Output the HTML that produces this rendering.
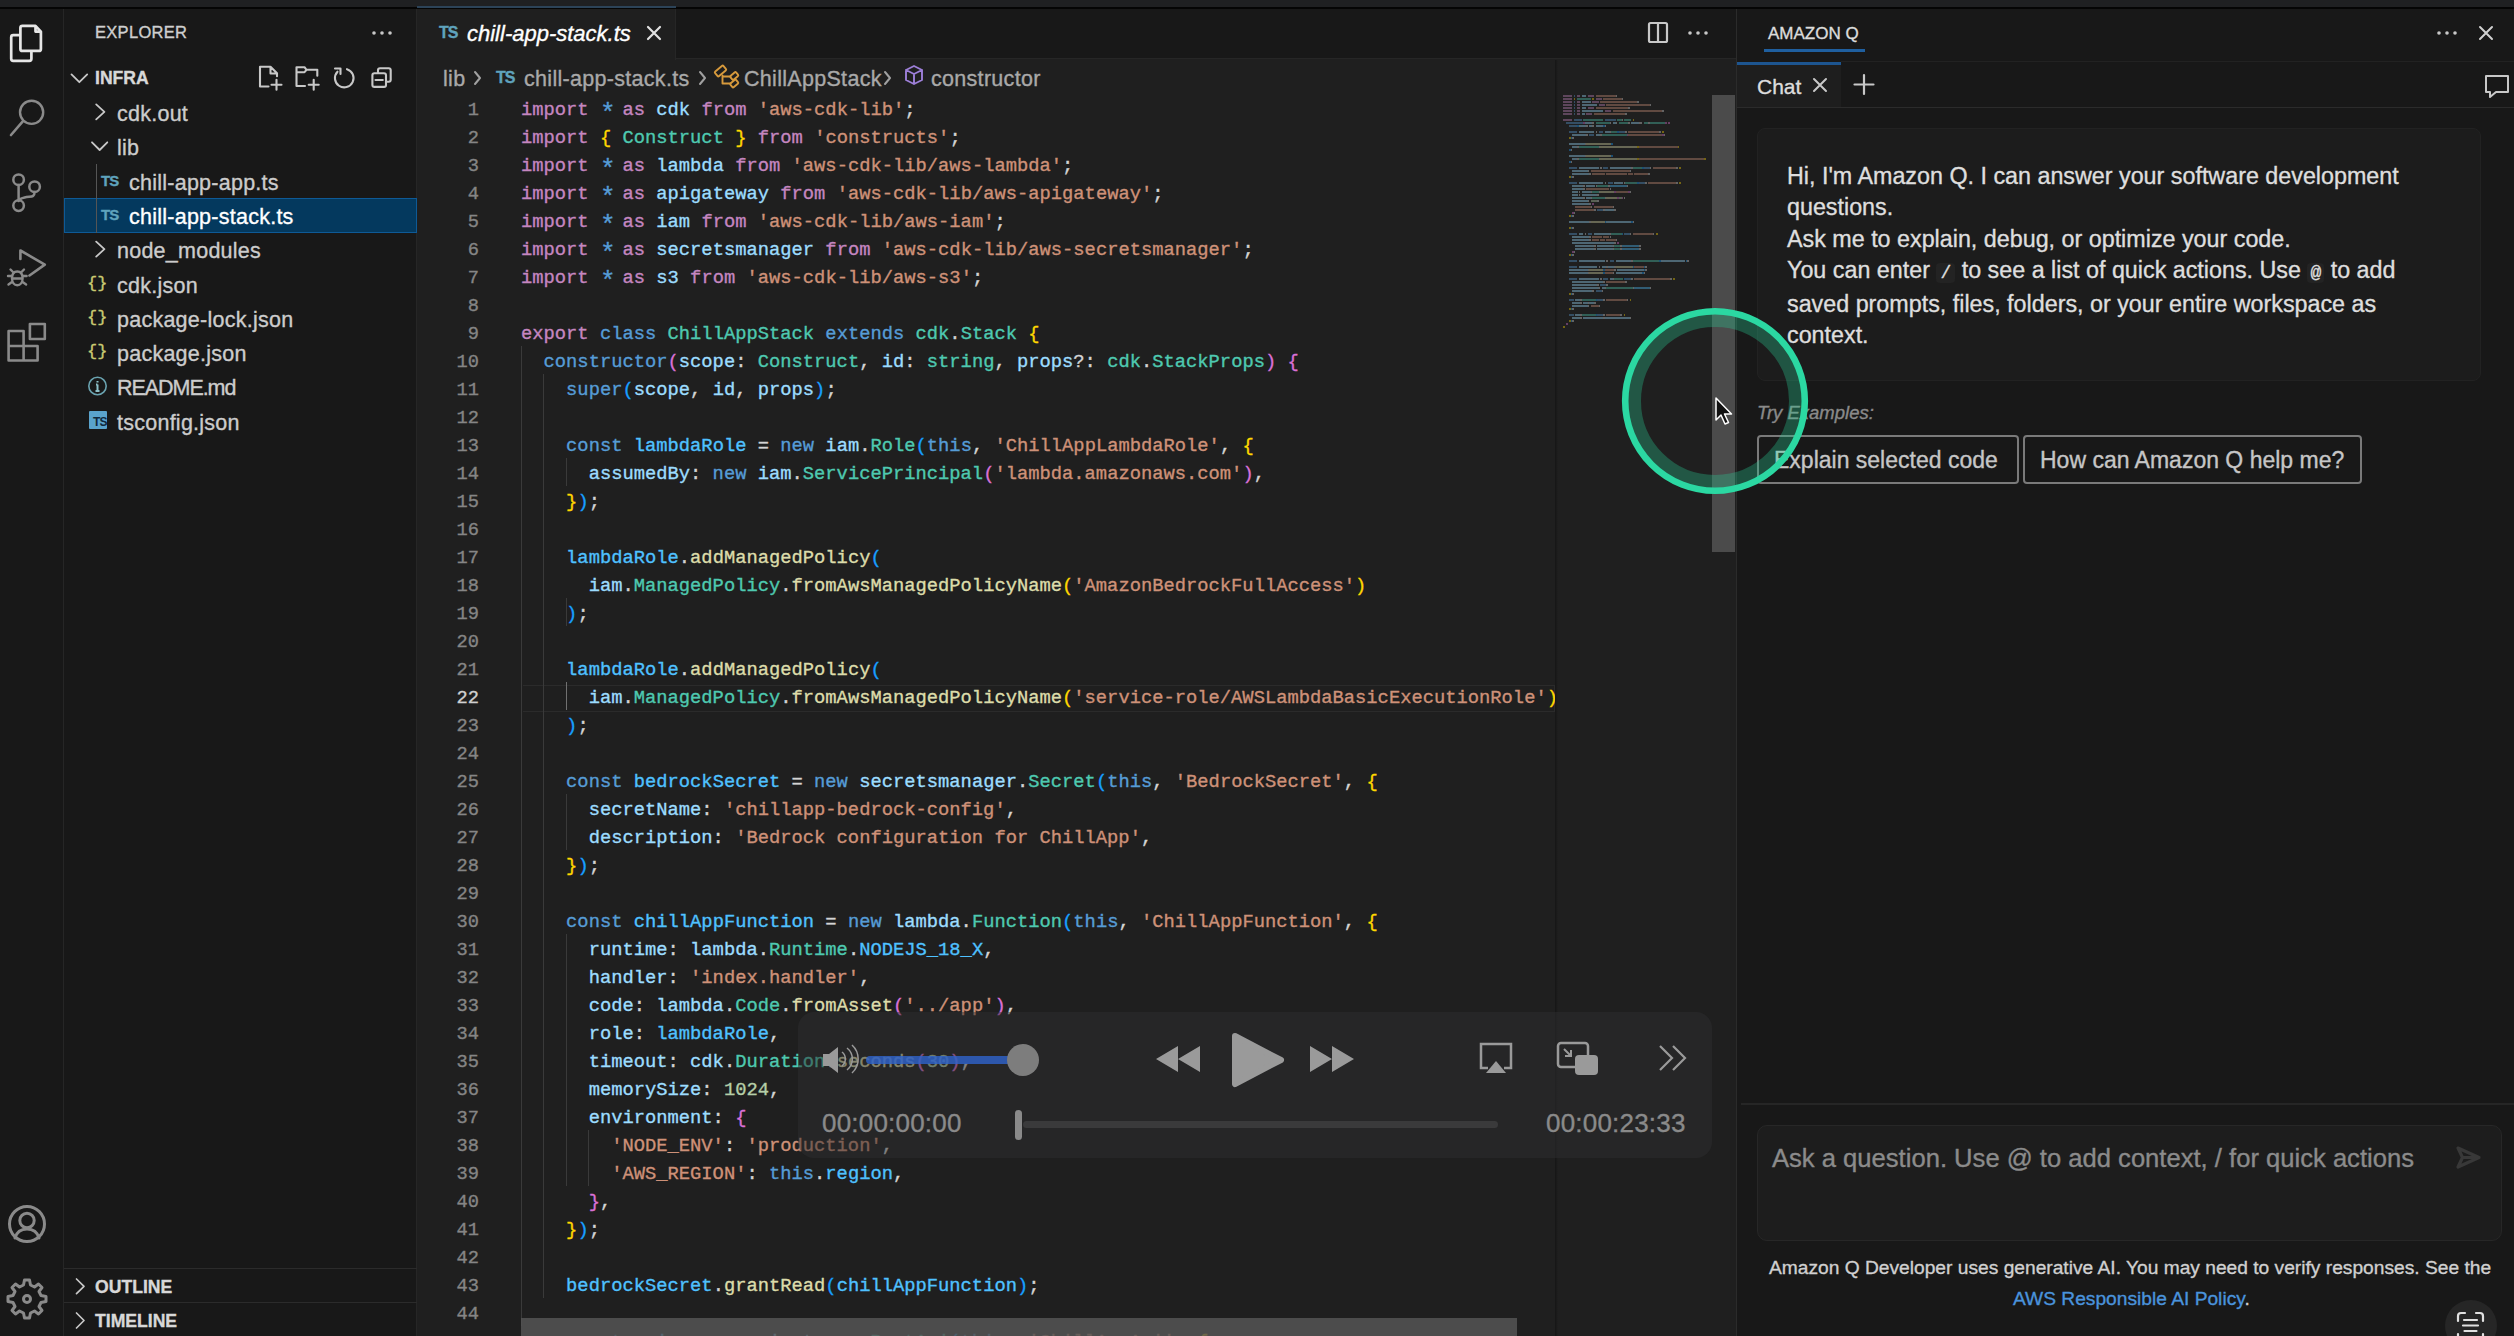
<!DOCTYPE html>
<html><head><meta charset="utf-8">
<style>
*{margin:0;padding:0;box-sizing:border-box}
html,body{width:2514px;height:1336px;overflow:hidden;background:#1f1f1f;font-family:"Liberation Sans",sans-serif;color:#cccccc;-webkit-text-stroke:0.35px currentColor}
.a{position:absolute}
svg{position:absolute;overflow:visible}
#topstrip{left:0;top:0;width:2514px;height:9px;background:#1f2022;border-bottom:2px solid #050505}
#act{left:0;top:9px;width:64px;height:1327px;background:#181818;border-right:1px solid #262626}
#side{left:64px;top:9px;width:353px;height:1327px;background:#181818;border-right:1px solid #262626}
#editor{left:417px;top:9px;width:1319px;height:1327px;background:#1f1f1f;overflow:hidden}
#tabbar{left:0;top:0;width:1319px;height:50px;background:#181818;border-bottom:1px solid #262626}
#tab{left:0;top:0;width:259px;height:51px;background:#1f1f1f;border-right:1px solid #262626}
#rpanel{left:1736px;top:9px;width:778px;height:1327px;background:#181818;border-left:1px solid #2b2b2b;overflow:hidden}
.ln{position:absolute;left:104px;height:28px;line-height:28px;white-space:pre;font-family:"Liberation Mono",monospace;font-size:18.8px;color:#d4d4d4}
.num{position:absolute;left:10px;width:52px;text-align:right;height:28px;line-height:28px;font-family:"Liberation Mono",monospace;font-size:18.7px;color:#858585}
.num.act{color:#d0d0d0}
.k{color:#c586c0}.b{color:#569cd6}.v{color:#9cdcfe}.t{color:#4ec9b0}.f{color:#dcdcaa}.s{color:#ce9178}.n{color:#b5cea8}.c{color:#4fc1ff}.c2{color:#4fc1ff}.y{color:#ffd700}.p{color:#da70d6}.l{color:#179fff}.ast{display:inline-block;width:11.28px;font-size:26px;line-height:10px;vertical-align:-6px;text-align:center}
.tree{position:absolute;font-size:21.5px;color:#cccccc;height:34px;line-height:34px;white-space:nowrap;letter-spacing:0.25px;margin-top:2px}
.ts{position:absolute;font-size:15px;font-weight:bold;color:#5fa3bd;letter-spacing:-1px}
.br{position:absolute;font-size:17px;color:#c9ca72;font-family:"Liberation Mono",monospace}
#mini i{position:absolute;height:2px;opacity:.38}
.g{position:absolute;width:1px;background:#3a3a3a}
.crumb{position:absolute;top:58px;font-size:21.5px;color:#a9a9a9;white-space:nowrap;letter-spacing:0.3px}
.chat{position:absolute;left:50px;font-size:23.3px;color:#dedede;white-space:nowrap}
.btn{position:absolute;top:426px;height:49px;border:2px solid #7a7a7a;border-radius:4px;font-size:23px;color:#c6c6c6;line-height:47px;padding-left:15px}
</style></head><body>
<div id="topstrip" class="a"></div>
<div class="a" style="left:417px;top:6px;width:259px;height:2px;background:#2c4358"></div>

<!-- activity bar -->
<div id="act" class="a">
 <svg width="64" height="1336" viewBox="0 0 64 1336" style="top:-9px" fill="none" stroke-linejoin="round">
  <g stroke="#e6e6e6" stroke-width="3">
   <path d="M22.4 25.8 h13.1 l5.4 5.8 v17.3 a2 2 0 0 1 -2 2 h-16.5 a2 2 0 0 1 -2 -2 v-21.1 a2 2 0 0 1 2 -2 z M35.5 26 v5.6 h5.4" stroke-width="2.7"/>
   <path d="M20.4 35.2 h-7.2 a2 2 0 0 0 -2 2 v21.6 a2 2 0 0 0 2 2 h16.2 a2 2 0 0 0 2 -2 v-7.9" stroke-width="2.7"/>
  </g>
  <g transform="translate(0,9)">
  <g stroke="#8a8a8a" stroke-width="3" stroke-linecap="round">
   <circle cx="31.6" cy="103.3" r="11.6" stroke-width="2.4"/>
   <path d="M23 112.2 L11 126" stroke-width="2.6"/>
   <g stroke-width="2.5"><circle cx="18.6" cy="170.7" r="5.3"/><circle cx="34.6" cy="177.7" r="5.3"/><circle cx="18.6" cy="196.6" r="5.3"/>
   <path d="M18.6 176 v15.3 M34.6 183 c0 6 -4 4 -10 5.5 c-4 1 -6 2 -6 3.5"/></g>
   <path d="M20.4 250 v-8.5 L44.8 255.6 L29.5 266.5" stroke-width="2.6"/>
   <path d="M17.3 262.5 c-3.6 0 -5.3 3 -5.3 6.8 c0 4 2.2 7 5.3 7 c3.1 0 5.3 -3 5.3 -7 c0 -3.8 -1.7 -6.8 -5.3 -6.8 z M12 267 h-4 M22.6 267 h4 M12 273 l-3.5 2.5 M22.6 273 l3.5 2.5 M13.5 263.5 l-3 -3 M21 263.5 l3 -3 M12.3 269.5 h10" stroke-width="2.4"/>
   <path d="M8.6 322 h15 v29.5 h-15 z M8.6 337 h29 v14.5 h-14 M29.9 315 h14.9 v15 h-14.9 z" stroke-width="2.6" stroke-linejoin="round"/>
   <circle cx="27" cy="1215" r="17.5"/>
   <circle cx="27" cy="1211.5" r="7.2"/>
   <path d="M15 1229 c2 -7 7 -9 12 -9 c5 0 10 2 12 9"/>
  </g>
  <g stroke="#8a8a8a" stroke-width="3" stroke-linejoin="round">
   <path d="M24.5 1271 h5 l1 5 l4 2 l4 -3 l3.5 3.5 l-3 4 l2 4 l5 1 v5 l-5 1 l-2 4 l3 4 l-3.5 3.5 l-4 -3 l-4 2 l-1 5 h-5 l-1 -5 l-4 -2 l-4 3 l-3.5 -3.5 l3 -4 l-2 -4 l-5 -1 v-5 l5 -1 l2 -4 l-3 -4 l3.5 -3.5 l4 3 l4 -2 z"/>
   <circle cx="27" cy="1290" r="3.5"/>
  </g></g>
 </svg>
</div>

<!-- sidebar -->
<div id="side" class="a">
  <div class="a" style="left:31px;top:14px;font-size:16.5px;letter-spacing:.3px;color:#cfcfcf">EXPLORER</div>
  <svg width="353" height="1327" fill="none" stroke-linecap="round" stroke-linejoin="round">
   <g fill="#c8c8c8" stroke="none"><circle cx="310" cy="24" r="1.8"/><circle cx="318" cy="24" r="1.8"/><circle cx="326" cy="24" r="1.8"/></g>
   <g stroke="#c8c8c8" stroke-width="2.2">
    <path d="M7.5 65.4 l7.85 7.8 l7.85 -7.8" stroke-width="1.8"/>
    <path d="M32.2 95.4 l8.2 7.45 l-8.2 7.45" stroke-width="1.8"/>
    <path d="M28 133.3 l7.65 7.7 l7.65 -7.7" stroke-width="1.8"/>
    <path d="M32.2 232.7 l8.2 7.45 l-8.2 7.45" stroke-width="1.8"/>
    <path d="M12.5 1270 l7.5 7.3 l-7.5 7.3" stroke-width="1.7"/>
    <path d="M12.5 1304 l7.5 7.5 l-7.5 7.5" stroke-width="1.7"/>
    <!-- new file -->
    <path d="M204.5 77.5 h-8.5 v-19.7 h10.5 l6.5 6.5 v3 M206.5 58 v6.5 h6.5 M212.5 70.7 v10 M207.5 75.7 h10" stroke-width="2.1"/>
    <!-- new folder -->
    <path d="M241 77 h-8.5 v-18.8 h8 l2 2.6 h10.8 v6 M232.5 63.2 h8 l2 -2.4 M249.7 70.7 v10 M244.7 75.7 h10" stroke-width="2.1"/>
    <!-- refresh -->
    <path d="M283 60.2 a9.3 9.3 0 1 1 -9.5 2.5 M271 59.5 h5.5 v5.5" stroke-width="2.1"/>
    <!-- collapse -->
    <path d="M314 64 v-2.8 a2 2 0 0 1 2 -2 h8.7 a2 2 0 0 1 2 2 v9.6 a2 2 0 0 1 -2 2 h-2.7 M310.4 64.3 h9.6 a2 2 0 0 1 2 2 v9.6 a2 2 0 0 1 -2 2 h-9.6 a2 2 0 0 1 -2 -2 v-9.6 a2 2 0 0 1 2 -2 z M311.5 71 h7.3" stroke-width="2.1"/>
   </g>
  </svg>
  <div class="a" style="left:31px;top:59px;font-size:17.6px;font-weight:bold;color:#d8d8d8">INFRA</div>
  <div class="a" style="left:0;top:189px;width:353px;height:35px;background:#04395e;border:1.5px solid #0e5a96"></div>
  <div class="a" style="left:32px;top:155px;width:1px;height:69px;background:#555"></div>
  <div class="tree" style="left:53px;top:86px">cdk.out</div>
  <div class="tree" style="left:53px;top:120px">lib</div>
  <div class="ts" style="left:37px;top:163px">TS</div>
  <div class="tree" style="left:65px;top:155px">chill-app-app.ts</div>
  <div class="ts" style="left:37px;top:197px">TS</div>
  <div class="tree" style="left:65px;top:189px;color:#fff">chill-app-stack.ts</div>
  <div class="tree" style="left:53px;top:223px">node_modules</div>
  <div class="br" style="left:23px;top:265px">{}</div>
  <div class="tree" style="left:53px;top:258px">cdk.json</div>
  <div class="br" style="left:23px;top:299px">{}</div>
  <div class="tree" style="left:53px;top:292px">package-lock.json</div>
  <div class="br" style="left:23px;top:333px">{}</div>
  <div class="tree" style="left:53px;top:326px">package.json</div>
  <svg width="30" height="30" style="left:23px;top:367px" fill="none"><circle cx="10.5" cy="10" r="8.7" stroke="#6aa3b0" stroke-width="1.6"/><path d="M10.5 8.5 v6.5 M8.5 15 h4 M9 8.5 h1.5 M10.5 5 v1.4" stroke="#8cc0c8" stroke-width="2"/></svg>
  <div class="tree" style="left:53px;top:360px;letter-spacing:-1.05px">README.md</div>
  <div class="a" style="left:25px;top:402px;width:18px;height:18px;background:#5aa3cc;border-radius:1px"></div>
  <div class="a" style="left:29px;top:406px;font-size:12px;font-weight:bold;color:#10283c;letter-spacing:-0.8px;-webkit-text-stroke:0">TS</div>
  <div class="tree" style="left:53px;top:395px">tsconfig.json</div>
  <div class="a" style="left:0;top:1259px;width:353px;height:1px;background:#2b2b2b"></div>
  <div class="a" style="left:31px;top:1268px;font-size:17.6px;font-weight:bold;color:#d8d8d8">OUTLINE</div>
  <div class="a" style="left:0;top:1293px;width:353px;height:1px;background:#2b2b2b"></div>
  <div class="a" style="left:31px;top:1302px;font-size:17.6px;font-weight:bold;color:#d8d8d8">TIMELINE</div>
</div>

<!-- editor -->
<div id="editor" class="a">
  <div id="tabbar" class="a"></div>
  <div id="tab" class="a"></div>
  <div class="ts" style="left:22px;top:15px;font-size:16px;letter-spacing:-1px">TS</div>
  <div class="a" style="left:50px;top:12px;font-size:22px;font-style:italic;color:#fff">chill-app-stack.ts</div>
  <svg width="1319" height="90" fill="none" stroke-linecap="round" stroke-linejoin="round">
   <path d="M231 18 l12 12 M243 18 l-12 12" stroke="#e0e0e0" stroke-width="2.2"/>
   <rect x="1232" y="14" width="18" height="19" rx="1.5" stroke="#c8c8c8" stroke-width="2.2"/>
   <path d="M1241 14 v19" stroke="#c8c8c8" stroke-width="2.2"/>
   <g fill="#c8c8c8"><circle cx="1273" cy="24" r="1.8"/><circle cx="1281" cy="24" r="1.8"/><circle cx="1289" cy="24" r="1.8"/></g>
   <g stroke="#a0a0a0" stroke-width="2">
    <path d="M58 63 l5 6 l-5 6"/><path d="M283 63 l5 6 l-5 6"/><path d="M468 63 l5 6 l-5 6"/>
   </g>
   <g stroke="#d79a3c" stroke-width="1.9"><rect x="298" y="59" width="11" height="6" rx="1.2" transform="rotate(-40 303.5 62)"/>
   <rect x="313.5" y="64.5" width="7.5" height="5" rx="1.2" transform="rotate(-40 317.2 67)"/>
   <rect x="313.5" y="72" width="7.5" height="5" rx="1.2" transform="rotate(-40 317.2 74.5)"/>
   <path d="M305.5 66.5 v8 h8 M305.5 67.5 h8"/></g>
   <path d="M489 61 l8 -4 l8 4 v10 l-8 4 l-8 -4 z M489 61 l8 4 l8 -4 M497 65 v10" stroke="#9d7fd8" stroke-width="1.9"/>
  </svg>
  <div class="ts" style="left:79px;top:60px;font-size:16px;letter-spacing:-1px">TS</div>
  <div class="crumb" style="left:26px">lib</div>
  <div class="crumb" style="left:107px">chill-app-stack.ts</div>
  <div class="crumb" style="left:327px">ChillAppStack</div>
  <div class="crumb" style="left:514px">constructor</div>
  <!-- current line box -->
  <div class="a" style="left:106px;top:676px;width:1032px;height:27px;border:1.5px solid #2b2b2b;border-left:none"></div>
  <!-- indent guides -->
  <div class="g" style="left:104px;top:337px;height:980px"></div>
  <div class="g" style="left:126px;top:365px;height:924px"></div>
  <div class="g" style="left:149px;top:449px;height:28px"></div>
  <div class="g" style="left:149px;top:589px;height:28px"></div>
  <div class="g" style="left:149px;top:673px;height:28px;background:#707070"></div>
  <div class="g" style="left:149px;top:785px;height:56px"></div>
  <div class="g" style="left:149px;top:925px;height:252px"></div>
  <div class="g" style="left:171px;top:1121px;height:56px"></div>
  <div id="code" class="a" style="left:0;top:0;width:1138px;height:1327px;overflow:hidden">
<div class="ln" style="top:87px"><span class="k">import</span> <span class="ast b">*</span> <span class="k">as</span> <span class="v">cdk</span> <span class="k">from</span> <span class="s">&#x27;aws-cdk-lib&#x27;</span>;</div>
<div class="num" style="top:87px">1</div>
<div class="ln" style="top:115px"><span class="k">import</span> <span class="y">{</span> <span class="t">Construct</span> <span class="y">}</span> <span class="k">from</span> <span class="s">&#x27;constructs&#x27;</span>;</div>
<div class="num" style="top:115px">2</div>
<div class="ln" style="top:143px"><span class="k">import</span> <span class="ast b">*</span> <span class="k">as</span> <span class="v">lambda</span> <span class="k">from</span> <span class="s">&#x27;aws-cdk-lib/aws-lambda&#x27;</span>;</div>
<div class="num" style="top:143px">3</div>
<div class="ln" style="top:171px"><span class="k">import</span> <span class="ast b">*</span> <span class="k">as</span> <span class="v">apigateway</span> <span class="k">from</span> <span class="s">&#x27;aws-cdk-lib/aws-apigateway&#x27;</span>;</div>
<div class="num" style="top:171px">4</div>
<div class="ln" style="top:199px"><span class="k">import</span> <span class="ast b">*</span> <span class="k">as</span> <span class="v">iam</span> <span class="k">from</span> <span class="s">&#x27;aws-cdk-lib/aws-iam&#x27;</span>;</div>
<div class="num" style="top:199px">5</div>
<div class="ln" style="top:227px"><span class="k">import</span> <span class="ast b">*</span> <span class="k">as</span> <span class="v">secretsmanager</span> <span class="k">from</span> <span class="s">&#x27;aws-cdk-lib/aws-secretsmanager&#x27;</span>;</div>
<div class="num" style="top:227px">6</div>
<div class="ln" style="top:255px"><span class="k">import</span> <span class="ast b">*</span> <span class="k">as</span> <span class="v">s3</span> <span class="k">from</span> <span class="s">&#x27;aws-cdk-lib/aws-s3&#x27;</span>;</div>
<div class="num" style="top:255px">7</div>
<div class="ln" style="top:283px"></div>
<div class="num" style="top:283px">8</div>
<div class="ln" style="top:311px"><span class="k">export</span> <span class="b">class</span> <span class="t">ChillAppStack</span> <span class="b">extends</span> <span class="t">cdk</span>.<span class="t">Stack</span> <span class="y">{</span></div>
<div class="num" style="top:311px">9</div>
<div class="ln" style="top:339px">  <span class="b">constructor</span><span class="p">(</span><span class="v">scope</span>: <span class="t">Construct</span>, <span class="v">id</span>: <span class="t">string</span>, <span class="v">props</span>?: <span class="t">cdk</span>.<span class="t">StackProps</span><span class="p">)</span> <span class="p">{</span></div>
<div class="num" style="top:339px">10</div>
<div class="ln" style="top:367px">    <span class="b">super</span><span class="l">(</span><span class="v">scope</span>, <span class="v">id</span>, <span class="v">props</span><span class="l">)</span>;</div>
<div class="num" style="top:367px">11</div>
<div class="ln" style="top:395px"></div>
<div class="num" style="top:395px">12</div>
<div class="ln" style="top:423px">    <span class="b">const</span> <span class="c">lambdaRole</span> = <span class="b">new</span> <span class="v">iam</span>.<span class="t">Role</span><span class="l">(</span><span class="b">this</span>, <span class="s">&#x27;ChillAppLambdaRole&#x27;</span>, <span class="y">{</span></div>
<div class="num" style="top:423px">13</div>
<div class="ln" style="top:451px">      <span class="v">assumedBy</span>: <span class="b">new</span> <span class="v">iam</span>.<span class="t">ServicePrincipal</span><span class="p">(</span><span class="s">&#x27;lambda.amazonaws.com&#x27;</span><span class="p">)</span>,</div>
<div class="num" style="top:451px">14</div>
<div class="ln" style="top:479px">    <span class="y">}</span><span class="l">)</span>;</div>
<div class="num" style="top:479px">15</div>
<div class="ln" style="top:507px"></div>
<div class="num" style="top:507px">16</div>
<div class="ln" style="top:535px">    <span class="c">lambdaRole</span>.<span class="f">addManagedPolicy</span><span class="l">(</span></div>
<div class="num" style="top:535px">17</div>
<div class="ln" style="top:563px">      <span class="v">iam</span>.<span class="t">ManagedPolicy</span>.<span class="f">fromAwsManagedPolicyName</span><span class="y">(</span><span class="s">&#x27;AmazonBedrockFullAccess&#x27;</span><span class="y">)</span></div>
<div class="num" style="top:563px">18</div>
<div class="ln" style="top:591px">    <span class="l">)</span>;</div>
<div class="num" style="top:591px">19</div>
<div class="ln" style="top:619px"></div>
<div class="num" style="top:619px">20</div>
<div class="ln" style="top:647px">    <span class="c">lambdaRole</span>.<span class="f">addManagedPolicy</span><span class="l">(</span></div>
<div class="num" style="top:647px">21</div>
<div class="ln" style="top:675px">      <span class="v">iam</span>.<span class="t">ManagedPolicy</span>.<span class="f">fromAwsManagedPolicyName</span><span class="y">(</span><span class="s">&#x27;service-role/AWSLambdaBasicExecutionRole&#x27;</span><span class="y">)</span></div>
<div class="num act" style="top:675px">22</div>
<div class="ln" style="top:703px">    <span class="l">)</span>;</div>
<div class="num" style="top:703px">23</div>
<div class="ln" style="top:731px"></div>
<div class="num" style="top:731px">24</div>
<div class="ln" style="top:759px">    <span class="b">const</span> <span class="c">bedrockSecret</span> = <span class="b">new</span> <span class="v">secretsmanager</span>.<span class="t">Secret</span><span class="l">(</span><span class="b">this</span>, <span class="s">&#x27;BedrockSecret&#x27;</span>, <span class="y">{</span></div>
<div class="num" style="top:759px">25</div>
<div class="ln" style="top:787px">      <span class="v">secretName</span>: <span class="s">&#x27;chillapp-bedrock-config&#x27;</span>,</div>
<div class="num" style="top:787px">26</div>
<div class="ln" style="top:815px">      <span class="v">description</span>: <span class="s">&#x27;Bedrock configuration for ChillApp&#x27;</span>,</div>
<div class="num" style="top:815px">27</div>
<div class="ln" style="top:843px">    <span class="y">}</span><span class="l">)</span>;</div>
<div class="num" style="top:843px">28</div>
<div class="ln" style="top:871px"></div>
<div class="num" style="top:871px">29</div>
<div class="ln" style="top:899px">    <span class="b">const</span> <span class="c">chillAppFunction</span> = <span class="b">new</span> <span class="v">lambda</span>.<span class="t">Function</span><span class="l">(</span><span class="b">this</span>, <span class="s">&#x27;ChillAppFunction&#x27;</span>, <span class="y">{</span></div>
<div class="num" style="top:899px">30</div>
<div class="ln" style="top:927px">      <span class="v">runtime</span>: <span class="v">lambda</span>.<span class="t">Runtime</span>.<span class="c2">NODEJS_18_X</span>,</div>
<div class="num" style="top:927px">31</div>
<div class="ln" style="top:955px">      <span class="v">handler</span>: <span class="s">&#x27;index.handler&#x27;</span>,</div>
<div class="num" style="top:955px">32</div>
<div class="ln" style="top:983px">      <span class="v">code</span>: <span class="v">lambda</span>.<span class="t">Code</span>.<span class="f">fromAsset</span><span class="p">(</span><span class="s">&#x27;../app&#x27;</span><span class="p">)</span>,</div>
<div class="num" style="top:983px">33</div>
<div class="ln" style="top:1011px">      <span class="v">role</span>: <span class="c">lambdaRole</span>,</div>
<div class="num" style="top:1011px">34</div>
<div class="ln" style="top:1039px">      <span class="v">timeout</span>: <span class="v">cdk</span>.<span class="t">Duration</span>.<span class="f">seconds</span><span class="p">(</span><span class="n">30</span><span class="p">)</span>,</div>
<div class="num" style="top:1039px">35</div>
<div class="ln" style="top:1067px">      <span class="v">memorySize</span>: <span class="n">1024</span>,</div>
<div class="num" style="top:1067px">36</div>
<div class="ln" style="top:1095px">      <span class="v">environment</span>: <span class="p">{</span></div>
<div class="num" style="top:1095px">37</div>
<div class="ln" style="top:1123px">        <span class="s">&#x27;NODE_ENV&#x27;</span>: <span class="s">&#x27;production&#x27;</span>,</div>
<div class="num" style="top:1123px">38</div>
<div class="ln" style="top:1151px">        <span class="s">&#x27;AWS_REGION&#x27;</span>: <span class="b">this</span>.<span class="c">region</span>,</div>
<div class="num" style="top:1151px">39</div>
<div class="ln" style="top:1179px">      <span class="p">}</span>,</div>
<div class="num" style="top:1179px">40</div>
<div class="ln" style="top:1207px">    <span class="y">}</span><span class="l">)</span>;</div>
<div class="num" style="top:1207px">41</div>
<div class="ln" style="top:1235px"></div>
<div class="num" style="top:1235px">42</div>
<div class="ln" style="top:1263px">    <span class="c">bedrockSecret</span>.<span class="f">grantRead</span><span class="l">(</span><span class="c">chillAppFunction</span><span class="l">)</span>;</div>
<div class="num" style="top:1263px">43</div>
<div class="ln" style="top:1291px"></div>
<div class="num" style="top:1291px">44</div>
<div class="ln" style="top:1319px">    <span class="b">const</span> <span class="c">api</span> = <span class="b">new</span> <span class="v">apigateway</span>.<span class="t">RestApi</span><span class="l">(</span><span class="b">this</span>, <span class="s">&#x27;ChillAppApi&#x27;</span>, <span class="y">{</span></div>
  </div>
  <div class="a" style="left:1138px;top:51px;width:3px;height:1276px;background:linear-gradient(90deg,#151515,#1f1f1f)"></div>
  <div id="mini" class="a" style="left:1146px;top:86px;width:150px;height:250px;overflow:hidden">
<i style="left:0.0px;top:0px;width:9.3px;background:#c586c0"></i>
<i style="left:10.8px;top:0px;width:1.6px;background:#569cd6"></i>
<i style="left:14.0px;top:0px;width:3.1px;background:#c586c0"></i>
<i style="left:18.6px;top:0px;width:4.7px;background:#9cdcfe"></i>
<i style="left:24.8px;top:0px;width:6.2px;background:#c586c0"></i>
<i style="left:32.6px;top:0px;width:20.2px;background:#ce9178"></i>
<i style="left:52.7px;top:0px;width:1.6px;background:#d4d4d4"></i>
<i style="left:0.0px;top:3px;width:9.3px;background:#c586c0"></i>
<i style="left:10.8px;top:3px;width:1.6px;background:#ffd700"></i>
<i style="left:14.0px;top:3px;width:14.0px;background:#4ec9b0"></i>
<i style="left:29.4px;top:3px;width:1.6px;background:#ffd700"></i>
<i style="left:32.6px;top:3px;width:6.2px;background:#c586c0"></i>
<i style="left:40.3px;top:3px;width:18.6px;background:#ce9178"></i>
<i style="left:58.9px;top:3px;width:1.6px;background:#d4d4d4"></i>
<i style="left:0.0px;top:6px;width:9.3px;background:#c586c0"></i>
<i style="left:10.8px;top:6px;width:1.6px;background:#569cd6"></i>
<i style="left:14.0px;top:6px;width:3.1px;background:#c586c0"></i>
<i style="left:18.6px;top:6px;width:9.3px;background:#9cdcfe"></i>
<i style="left:29.4px;top:6px;width:6.2px;background:#c586c0"></i>
<i style="left:37.2px;top:6px;width:37.2px;background:#ce9178"></i>
<i style="left:74.4px;top:6px;width:1.6px;background:#d4d4d4"></i>
<i style="left:0.0px;top:9px;width:9.3px;background:#c586c0"></i>
<i style="left:10.8px;top:9px;width:1.6px;background:#569cd6"></i>
<i style="left:14.0px;top:9px;width:3.1px;background:#c586c0"></i>
<i style="left:18.6px;top:9px;width:15.5px;background:#9cdcfe"></i>
<i style="left:35.6px;top:9px;width:6.2px;background:#c586c0"></i>
<i style="left:43.4px;top:9px;width:43.4px;background:#ce9178"></i>
<i style="left:86.8px;top:9px;width:1.6px;background:#d4d4d4"></i>
<i style="left:0.0px;top:12px;width:9.3px;background:#c586c0"></i>
<i style="left:10.8px;top:12px;width:1.6px;background:#569cd6"></i>
<i style="left:14.0px;top:12px;width:3.1px;background:#c586c0"></i>
<i style="left:18.6px;top:12px;width:4.7px;background:#9cdcfe"></i>
<i style="left:24.8px;top:12px;width:6.2px;background:#c586c0"></i>
<i style="left:32.6px;top:12px;width:32.6px;background:#ce9178"></i>
<i style="left:65.1px;top:12px;width:1.6px;background:#d4d4d4"></i>
<i style="left:0.0px;top:15px;width:9.3px;background:#c586c0"></i>
<i style="left:10.8px;top:15px;width:1.6px;background:#569cd6"></i>
<i style="left:14.0px;top:15px;width:3.1px;background:#c586c0"></i>
<i style="left:18.6px;top:15px;width:21.7px;background:#9cdcfe"></i>
<i style="left:41.9px;top:15px;width:6.2px;background:#c586c0"></i>
<i style="left:49.6px;top:15px;width:49.6px;background:#ce9178"></i>
<i style="left:99.2px;top:15px;width:1.6px;background:#d4d4d4"></i>
<i style="left:0.0px;top:18px;width:9.3px;background:#c586c0"></i>
<i style="left:10.8px;top:18px;width:1.6px;background:#569cd6"></i>
<i style="left:14.0px;top:18px;width:3.1px;background:#c586c0"></i>
<i style="left:18.6px;top:18px;width:3.1px;background:#9cdcfe"></i>
<i style="left:23.2px;top:18px;width:6.2px;background:#c586c0"></i>
<i style="left:31.0px;top:18px;width:31.0px;background:#ce9178"></i>
<i style="left:62.0px;top:18px;width:1.6px;background:#d4d4d4"></i>
<i style="left:0.0px;top:24px;width:9.3px;background:#c586c0"></i>
<i style="left:10.8px;top:24px;width:7.8px;background:#569cd6"></i>
<i style="left:20.2px;top:24px;width:20.2px;background:#4ec9b0"></i>
<i style="left:41.9px;top:24px;width:10.8px;background:#569cd6"></i>
<i style="left:54.2px;top:24px;width:4.7px;background:#4ec9b0"></i>
<i style="left:58.9px;top:24px;width:1.6px;background:#d4d4d4"></i>
<i style="left:60.5px;top:24px;width:7.8px;background:#4ec9b0"></i>
<i style="left:69.8px;top:24px;width:1.6px;background:#ffd700"></i>
<i style="left:3.1px;top:27px;width:17.1px;background:#569cd6"></i>
<i style="left:20.2px;top:27px;width:1.6px;background:#da70d6"></i>
<i style="left:21.7px;top:27px;width:7.8px;background:#9cdcfe"></i>
<i style="left:29.4px;top:27px;width:1.6px;background:#d4d4d4"></i>
<i style="left:32.6px;top:27px;width:14.0px;background:#4ec9b0"></i>
<i style="left:46.5px;top:27px;width:1.6px;background:#d4d4d4"></i>
<i style="left:49.6px;top:27px;width:3.1px;background:#9cdcfe"></i>
<i style="left:52.7px;top:27px;width:1.6px;background:#d4d4d4"></i>
<i style="left:55.8px;top:27px;width:9.3px;background:#4ec9b0"></i>
<i style="left:65.1px;top:27px;width:1.6px;background:#d4d4d4"></i>
<i style="left:68.2px;top:27px;width:7.8px;background:#9cdcfe"></i>
<i style="left:76.0px;top:27px;width:3.1px;background:#d4d4d4"></i>
<i style="left:80.6px;top:27px;width:4.7px;background:#4ec9b0"></i>
<i style="left:85.2px;top:27px;width:1.6px;background:#d4d4d4"></i>
<i style="left:86.8px;top:27px;width:15.5px;background:#4ec9b0"></i>
<i style="left:102.3px;top:27px;width:1.6px;background:#da70d6"></i>
<i style="left:105.4px;top:27px;width:1.6px;background:#da70d6"></i>
<i style="left:6.2px;top:30px;width:7.8px;background:#569cd6"></i>
<i style="left:14.0px;top:30px;width:1.6px;background:#179fff"></i>
<i style="left:15.5px;top:30px;width:7.8px;background:#9cdcfe"></i>
<i style="left:23.2px;top:30px;width:1.6px;background:#d4d4d4"></i>
<i style="left:26.4px;top:30px;width:3.1px;background:#9cdcfe"></i>
<i style="left:29.4px;top:30px;width:1.6px;background:#d4d4d4"></i>
<i style="left:32.6px;top:30px;width:7.8px;background:#9cdcfe"></i>
<i style="left:40.3px;top:30px;width:1.6px;background:#179fff"></i>
<i style="left:41.9px;top:30px;width:1.6px;background:#d4d4d4"></i>
<i style="left:6.2px;top:36px;width:7.8px;background:#569cd6"></i>
<i style="left:15.5px;top:36px;width:15.5px;background:#9cdcfe"></i>
<i style="left:32.6px;top:36px;width:1.6px;background:#d4d4d4"></i>
<i style="left:35.6px;top:36px;width:4.7px;background:#569cd6"></i>
<i style="left:41.9px;top:36px;width:4.7px;background:#9cdcfe"></i>
<i style="left:46.5px;top:36px;width:1.6px;background:#d4d4d4"></i>
<i style="left:48.1px;top:36px;width:6.2px;background:#4ec9b0"></i>
<i style="left:54.2px;top:36px;width:1.6px;background:#179fff"></i>
<i style="left:55.8px;top:36px;width:6.2px;background:#569cd6"></i>
<i style="left:62.0px;top:36px;width:1.6px;background:#d4d4d4"></i>
<i style="left:65.1px;top:36px;width:31.0px;background:#ce9178"></i>
<i style="left:96.1px;top:36px;width:1.6px;background:#d4d4d4"></i>
<i style="left:99.2px;top:36px;width:1.6px;background:#ffd700"></i>
<i style="left:9.3px;top:39px;width:14.0px;background:#9cdcfe"></i>
<i style="left:23.2px;top:39px;width:1.6px;background:#d4d4d4"></i>
<i style="left:26.4px;top:39px;width:4.7px;background:#569cd6"></i>
<i style="left:32.6px;top:39px;width:4.7px;background:#9cdcfe"></i>
<i style="left:37.2px;top:39px;width:1.6px;background:#d4d4d4"></i>
<i style="left:38.8px;top:39px;width:24.8px;background:#4ec9b0"></i>
<i style="left:63.6px;top:39px;width:1.6px;background:#da70d6"></i>
<i style="left:65.1px;top:39px;width:34.1px;background:#ce9178"></i>
<i style="left:99.2px;top:39px;width:1.6px;background:#da70d6"></i>
<i style="left:100.8px;top:39px;width:1.6px;background:#d4d4d4"></i>
<i style="left:6.2px;top:42px;width:1.6px;background:#ffd700"></i>
<i style="left:7.8px;top:42px;width:1.6px;background:#179fff"></i>
<i style="left:9.3px;top:42px;width:1.6px;background:#d4d4d4"></i>
<i style="left:6.2px;top:48px;width:15.5px;background:#9cdcfe"></i>
<i style="left:21.7px;top:48px;width:1.6px;background:#d4d4d4"></i>
<i style="left:23.2px;top:48px;width:24.8px;background:#dcdcaa"></i>
<i style="left:48.1px;top:48px;width:1.6px;background:#179fff"></i>
<i style="left:9.3px;top:51px;width:4.7px;background:#9cdcfe"></i>
<i style="left:14.0px;top:51px;width:1.6px;background:#d4d4d4"></i>
<i style="left:15.5px;top:51px;width:20.2px;background:#4ec9b0"></i>
<i style="left:35.6px;top:51px;width:1.6px;background:#d4d4d4"></i>
<i style="left:37.2px;top:51px;width:37.2px;background:#dcdcaa"></i>
<i style="left:74.4px;top:51px;width:1.6px;background:#ffd700"></i>
<i style="left:76.0px;top:51px;width:38.8px;background:#ce9178"></i>
<i style="left:114.7px;top:51px;width:1.6px;background:#ffd700"></i>
<i style="left:6.2px;top:54px;width:1.6px;background:#179fff"></i>
<i style="left:7.8px;top:54px;width:1.6px;background:#d4d4d4"></i>
<i style="left:6.2px;top:60px;width:15.5px;background:#9cdcfe"></i>
<i style="left:21.7px;top:60px;width:1.6px;background:#d4d4d4"></i>
<i style="left:23.2px;top:60px;width:24.8px;background:#dcdcaa"></i>
<i style="left:48.1px;top:60px;width:1.6px;background:#179fff"></i>
<i style="left:9.3px;top:63px;width:4.7px;background:#9cdcfe"></i>
<i style="left:14.0px;top:63px;width:1.6px;background:#d4d4d4"></i>
<i style="left:15.5px;top:63px;width:20.2px;background:#4ec9b0"></i>
<i style="left:35.6px;top:63px;width:1.6px;background:#d4d4d4"></i>
<i style="left:37.2px;top:63px;width:37.2px;background:#dcdcaa"></i>
<i style="left:74.4px;top:63px;width:1.6px;background:#ffd700"></i>
<i style="left:76.0px;top:63px;width:65.1px;background:#ce9178"></i>
<i style="left:141.1px;top:63px;width:1.6px;background:#ffd700"></i>
<i style="left:6.2px;top:66px;width:1.6px;background:#179fff"></i>
<i style="left:7.8px;top:66px;width:1.6px;background:#d4d4d4"></i>
<i style="left:6.2px;top:72px;width:7.8px;background:#569cd6"></i>
<i style="left:15.5px;top:72px;width:20.2px;background:#9cdcfe"></i>
<i style="left:37.2px;top:72px;width:1.6px;background:#d4d4d4"></i>
<i style="left:40.3px;top:72px;width:4.7px;background:#569cd6"></i>
<i style="left:46.5px;top:72px;width:21.7px;background:#9cdcfe"></i>
<i style="left:68.2px;top:72px;width:1.6px;background:#d4d4d4"></i>
<i style="left:69.8px;top:72px;width:9.3px;background:#4ec9b0"></i>
<i style="left:79.0px;top:72px;width:1.6px;background:#179fff"></i>
<i style="left:80.6px;top:72px;width:6.2px;background:#569cd6"></i>
<i style="left:86.8px;top:72px;width:1.6px;background:#d4d4d4"></i>
<i style="left:89.9px;top:72px;width:23.2px;background:#ce9178"></i>
<i style="left:113.2px;top:72px;width:1.6px;background:#d4d4d4"></i>
<i style="left:116.2px;top:72px;width:1.6px;background:#ffd700"></i>
<i style="left:9.3px;top:75px;width:15.5px;background:#9cdcfe"></i>
<i style="left:24.8px;top:75px;width:1.6px;background:#d4d4d4"></i>
<i style="left:27.9px;top:75px;width:38.8px;background:#ce9178"></i>
<i style="left:66.7px;top:75px;width:1.6px;background:#d4d4d4"></i>
<i style="left:9.3px;top:78px;width:17.1px;background:#9cdcfe"></i>
<i style="left:26.4px;top:78px;width:1.6px;background:#d4d4d4"></i>
<i style="left:29.4px;top:78px;width:12.4px;background:#ce9178"></i>
<i style="left:43.4px;top:78px;width:20.2px;background:#ce9178"></i>
<i style="left:65.1px;top:78px;width:4.7px;background:#ce9178"></i>
<i style="left:71.3px;top:78px;width:14.0px;background:#ce9178"></i>
<i style="left:85.2px;top:78px;width:1.6px;background:#d4d4d4"></i>
<i style="left:6.2px;top:81px;width:1.6px;background:#ffd700"></i>
<i style="left:7.8px;top:81px;width:1.6px;background:#179fff"></i>
<i style="left:9.3px;top:81px;width:1.6px;background:#d4d4d4"></i>
<i style="left:6.2px;top:87px;width:7.8px;background:#569cd6"></i>
<i style="left:15.5px;top:87px;width:24.8px;background:#9cdcfe"></i>
<i style="left:41.9px;top:87px;width:1.6px;background:#d4d4d4"></i>
<i style="left:45.0px;top:87px;width:4.7px;background:#569cd6"></i>
<i style="left:51.1px;top:87px;width:9.3px;background:#9cdcfe"></i>
<i style="left:60.5px;top:87px;width:1.6px;background:#d4d4d4"></i>
<i style="left:62.0px;top:87px;width:12.4px;background:#4ec9b0"></i>
<i style="left:74.4px;top:87px;width:1.6px;background:#179fff"></i>
<i style="left:76.0px;top:87px;width:6.2px;background:#569cd6"></i>
<i style="left:82.2px;top:87px;width:1.6px;background:#d4d4d4"></i>
<i style="left:85.2px;top:87px;width:27.9px;background:#ce9178"></i>
<i style="left:113.2px;top:87px;width:1.6px;background:#d4d4d4"></i>
<i style="left:116.2px;top:87px;width:1.6px;background:#ffd700"></i>
<i style="left:9.3px;top:90px;width:10.8px;background:#9cdcfe"></i>
<i style="left:20.2px;top:90px;width:1.6px;background:#d4d4d4"></i>
<i style="left:23.2px;top:90px;width:9.3px;background:#9cdcfe"></i>
<i style="left:32.6px;top:90px;width:1.6px;background:#d4d4d4"></i>
<i style="left:34.1px;top:90px;width:10.8px;background:#4ec9b0"></i>
<i style="left:45.0px;top:90px;width:1.6px;background:#d4d4d4"></i>
<i style="left:46.5px;top:90px;width:17.1px;background:#4fc1ff"></i>
<i style="left:63.6px;top:90px;width:1.6px;background:#d4d4d4"></i>
<i style="left:9.3px;top:93px;width:10.8px;background:#9cdcfe"></i>
<i style="left:20.2px;top:93px;width:1.6px;background:#d4d4d4"></i>
<i style="left:23.2px;top:93px;width:23.2px;background:#ce9178"></i>
<i style="left:46.5px;top:93px;width:1.6px;background:#d4d4d4"></i>
<i style="left:9.3px;top:96px;width:6.2px;background:#9cdcfe"></i>
<i style="left:15.5px;top:96px;width:1.6px;background:#d4d4d4"></i>
<i style="left:18.6px;top:96px;width:9.3px;background:#9cdcfe"></i>
<i style="left:27.9px;top:96px;width:1.6px;background:#d4d4d4"></i>
<i style="left:29.4px;top:96px;width:6.2px;background:#4ec9b0"></i>
<i style="left:35.6px;top:96px;width:1.6px;background:#d4d4d4"></i>
<i style="left:37.2px;top:96px;width:14.0px;background:#dcdcaa"></i>
<i style="left:51.1px;top:96px;width:1.6px;background:#da70d6"></i>
<i style="left:52.7px;top:96px;width:12.4px;background:#ce9178"></i>
<i style="left:65.1px;top:96px;width:1.6px;background:#da70d6"></i>
<i style="left:66.7px;top:96px;width:1.6px;background:#d4d4d4"></i>
<i style="left:9.3px;top:99px;width:6.2px;background:#9cdcfe"></i>
<i style="left:15.5px;top:99px;width:1.6px;background:#d4d4d4"></i>
<i style="left:18.6px;top:99px;width:15.5px;background:#9cdcfe"></i>
<i style="left:34.1px;top:99px;width:1.6px;background:#d4d4d4"></i>
<i style="left:9.3px;top:102px;width:10.8px;background:#9cdcfe"></i>
<i style="left:20.2px;top:102px;width:1.6px;background:#d4d4d4"></i>
<i style="left:23.2px;top:102px;width:4.7px;background:#9cdcfe"></i>
<i style="left:27.9px;top:102px;width:1.6px;background:#d4d4d4"></i>
<i style="left:29.4px;top:102px;width:12.4px;background:#4ec9b0"></i>
<i style="left:41.9px;top:102px;width:1.6px;background:#d4d4d4"></i>
<i style="left:43.4px;top:102px;width:10.8px;background:#dcdcaa"></i>
<i style="left:54.2px;top:102px;width:1.6px;background:#da70d6"></i>
<i style="left:55.8px;top:102px;width:3.1px;background:#b5cea8"></i>
<i style="left:58.9px;top:102px;width:1.6px;background:#da70d6"></i>
<i style="left:60.5px;top:102px;width:1.6px;background:#d4d4d4"></i>
<i style="left:9.3px;top:105px;width:15.5px;background:#9cdcfe"></i>
<i style="left:24.8px;top:105px;width:1.6px;background:#d4d4d4"></i>
<i style="left:27.9px;top:105px;width:6.2px;background:#b5cea8"></i>
<i style="left:34.1px;top:105px;width:1.6px;background:#d4d4d4"></i>
<i style="left:9.3px;top:108px;width:17.1px;background:#9cdcfe"></i>
<i style="left:26.4px;top:108px;width:1.6px;background:#d4d4d4"></i>
<i style="left:29.4px;top:108px;width:1.6px;background:#da70d6"></i>
<i style="left:12.4px;top:111px;width:15.5px;background:#ce9178"></i>
<i style="left:27.9px;top:111px;width:1.6px;background:#d4d4d4"></i>
<i style="left:31.0px;top:111px;width:18.6px;background:#ce9178"></i>
<i style="left:49.6px;top:111px;width:1.6px;background:#d4d4d4"></i>
<i style="left:12.4px;top:114px;width:18.6px;background:#ce9178"></i>
<i style="left:31.0px;top:114px;width:1.6px;background:#d4d4d4"></i>
<i style="left:34.1px;top:114px;width:6.2px;background:#569cd6"></i>
<i style="left:40.3px;top:114px;width:1.6px;background:#d4d4d4"></i>
<i style="left:41.9px;top:114px;width:9.3px;background:#9cdcfe"></i>
<i style="left:51.1px;top:114px;width:1.6px;background:#d4d4d4"></i>
<i style="left:9.3px;top:117px;width:1.6px;background:#da70d6"></i>
<i style="left:10.8px;top:117px;width:1.6px;background:#d4d4d4"></i>
<i style="left:6.2px;top:120px;width:1.6px;background:#ffd700"></i>
<i style="left:7.8px;top:120px;width:1.6px;background:#179fff"></i>
<i style="left:9.3px;top:120px;width:1.6px;background:#d4d4d4"></i>
<i style="left:6.2px;top:126px;width:20.2px;background:#9cdcfe"></i>
<i style="left:26.4px;top:126px;width:1.6px;background:#d4d4d4"></i>
<i style="left:27.9px;top:126px;width:14.0px;background:#dcdcaa"></i>
<i style="left:41.9px;top:126px;width:1.6px;background:#179fff"></i>
<i style="left:43.4px;top:126px;width:24.8px;background:#9cdcfe"></i>
<i style="left:68.2px;top:126px;width:1.6px;background:#179fff"></i>
<i style="left:69.8px;top:126px;width:1.6px;background:#d4d4d4"></i>
<i style="left:6.2px;top:132px;width:1.6px;background:#ffd700"></i>
<i style="left:7.8px;top:132px;width:1.6px;background:#179fff"></i>
<i style="left:9.3px;top:132px;width:1.6px;background:#d4d4d4"></i>
<i style="left:6.2px;top:138px;width:7.8px;background:#569cd6"></i>
<i style="left:15.5px;top:138px;width:4.7px;background:#9cdcfe"></i>
<i style="left:21.7px;top:138px;width:1.6px;background:#d4d4d4"></i>
<i style="left:24.8px;top:138px;width:4.7px;background:#569cd6"></i>
<i style="left:31.0px;top:138px;width:15.5px;background:#9cdcfe"></i>
<i style="left:46.5px;top:138px;width:1.6px;background:#d4d4d4"></i>
<i style="left:48.1px;top:138px;width:10.8px;background:#4ec9b0"></i>
<i style="left:58.9px;top:138px;width:1.6px;background:#179fff"></i>
<i style="left:60.5px;top:138px;width:6.2px;background:#569cd6"></i>
<i style="left:66.7px;top:138px;width:1.6px;background:#d4d4d4"></i>
<i style="left:69.8px;top:138px;width:20.2px;background:#ce9178"></i>
<i style="left:89.9px;top:138px;width:1.6px;background:#d4d4d4"></i>
<i style="left:93.0px;top:138px;width:1.6px;background:#ffd700"></i>
<i style="left:9.3px;top:141px;width:17.1px;background:#9cdcfe"></i>
<i style="left:26.4px;top:141px;width:1.6px;background:#d4d4d4"></i>
<i style="left:29.4px;top:141px;width:9.3px;background:#ce9178"></i>
<i style="left:40.3px;top:141px;width:6.2px;background:#ce9178"></i>
<i style="left:46.5px;top:141px;width:1.6px;background:#d4d4d4"></i>
<i style="left:9.3px;top:144px;width:17.1px;background:#9cdcfe"></i>
<i style="left:26.4px;top:144px;width:1.6px;background:#d4d4d4"></i>
<i style="left:29.4px;top:144px;width:6.2px;background:#ce9178"></i>
<i style="left:37.2px;top:144px;width:4.7px;background:#ce9178"></i>
<i style="left:43.4px;top:144px;width:9.3px;background:#ce9178"></i>
<i style="left:52.7px;top:144px;width:1.6px;background:#d4d4d4"></i>
<i style="left:9.3px;top:147px;width:41.9px;background:#9cdcfe"></i>
<i style="left:51.1px;top:147px;width:1.6px;background:#d4d4d4"></i>
<i style="left:54.2px;top:147px;width:1.6px;background:#da70d6"></i>
<i style="left:12.4px;top:150px;width:18.6px;background:#9cdcfe"></i>
<i style="left:31.0px;top:150px;width:1.6px;background:#d4d4d4"></i>
<i style="left:34.1px;top:150px;width:15.5px;background:#9cdcfe"></i>
<i style="left:49.6px;top:150px;width:1.6px;background:#d4d4d4"></i>
<i style="left:51.1px;top:150px;width:6.2px;background:#4ec9b0"></i>
<i style="left:57.4px;top:150px;width:1.6px;background:#d4d4d4"></i>
<i style="left:58.9px;top:150px;width:17.1px;background:#4fc1ff"></i>
<i style="left:76.0px;top:150px;width:1.6px;background:#d4d4d4"></i>
<i style="left:12.4px;top:153px;width:18.6px;background:#9cdcfe"></i>
<i style="left:31.0px;top:153px;width:1.6px;background:#d4d4d4"></i>
<i style="left:34.1px;top:153px;width:15.5px;background:#9cdcfe"></i>
<i style="left:49.6px;top:153px;width:1.6px;background:#d4d4d4"></i>
<i style="left:51.1px;top:153px;width:6.2px;background:#4ec9b0"></i>
<i style="left:57.4px;top:153px;width:1.6px;background:#d4d4d4"></i>
<i style="left:58.9px;top:153px;width:17.1px;background:#4fc1ff"></i>
<i style="left:76.0px;top:153px;width:1.6px;background:#d4d4d4"></i>
<i style="left:9.3px;top:156px;width:1.6px;background:#da70d6"></i>
<i style="left:10.8px;top:156px;width:1.6px;background:#d4d4d4"></i>
<i style="left:6.2px;top:159px;width:1.6px;background:#ffd700"></i>
<i style="left:7.8px;top:159px;width:1.6px;background:#179fff"></i>
<i style="left:9.3px;top:159px;width:1.6px;background:#d4d4d4"></i>
<i style="left:6.2px;top:165px;width:7.8px;background:#569cd6"></i>
<i style="left:15.5px;top:165px;width:26.4px;background:#9cdcfe"></i>
<i style="left:43.4px;top:165px;width:1.6px;background:#d4d4d4"></i>
<i style="left:46.5px;top:165px;width:4.7px;background:#569cd6"></i>
<i style="left:52.7px;top:165px;width:15.5px;background:#9cdcfe"></i>
<i style="left:68.2px;top:165px;width:1.6px;background:#d4d4d4"></i>
<i style="left:69.8px;top:165px;width:26.4px;background:#4ec9b0"></i>
<i style="left:96.1px;top:165px;width:1.6px;background:#179fff"></i>
<i style="left:97.7px;top:165px;width:24.8px;background:#9cdcfe"></i>
<i style="left:122.5px;top:165px;width:1.6px;background:#179fff"></i>
<i style="left:124.0px;top:165px;width:1.6px;background:#d4d4d4"></i>
<i style="left:6.2px;top:171px;width:7.8px;background:#569cd6"></i>
<i style="left:15.5px;top:171px;width:18.6px;background:#9cdcfe"></i>
<i style="left:35.6px;top:171px;width:1.6px;background:#d4d4d4"></i>
<i style="left:38.8px;top:171px;width:4.7px;background:#9cdcfe"></i>
<i style="left:43.4px;top:171px;width:1.6px;background:#d4d4d4"></i>
<i style="left:45.0px;top:171px;width:6.2px;background:#9cdcfe"></i>
<i style="left:51.1px;top:171px;width:1.6px;background:#d4d4d4"></i>
<i style="left:52.7px;top:171px;width:17.1px;background:#dcdcaa"></i>
<i style="left:69.8px;top:171px;width:1.6px;background:#179fff"></i>
<i style="left:71.3px;top:171px;width:9.3px;background:#ce9178"></i>
<i style="left:80.6px;top:171px;width:1.6px;background:#179fff"></i>
<i style="left:82.2px;top:171px;width:1.6px;background:#d4d4d4"></i>
<i style="left:6.2px;top:174px;width:18.6px;background:#9cdcfe"></i>
<i style="left:24.8px;top:174px;width:1.6px;background:#d4d4d4"></i>
<i style="left:26.4px;top:174px;width:14.0px;background:#dcdcaa"></i>
<i style="left:40.3px;top:174px;width:1.6px;background:#179fff"></i>
<i style="left:41.9px;top:174px;width:9.3px;background:#ce9178"></i>
<i style="left:51.1px;top:174px;width:1.6px;background:#d4d4d4"></i>
<i style="left:54.2px;top:174px;width:26.4px;background:#9cdcfe"></i>
<i style="left:80.6px;top:174px;width:1.6px;background:#179fff"></i>
<i style="left:82.2px;top:174px;width:1.6px;background:#d4d4d4"></i>
<i style="left:6.2px;top:177px;width:18.6px;background:#9cdcfe"></i>
<i style="left:24.8px;top:177px;width:1.6px;background:#d4d4d4"></i>
<i style="left:26.4px;top:177px;width:14.0px;background:#dcdcaa"></i>
<i style="left:40.3px;top:177px;width:1.6px;background:#179fff"></i>
<i style="left:41.9px;top:177px;width:7.8px;background:#ce9178"></i>
<i style="left:49.6px;top:177px;width:1.6px;background:#d4d4d4"></i>
<i style="left:52.7px;top:177px;width:26.4px;background:#9cdcfe"></i>
<i style="left:79.0px;top:177px;width:1.6px;background:#179fff"></i>
<i style="left:80.6px;top:177px;width:1.6px;background:#d4d4d4"></i>
<i style="left:6.2px;top:183px;width:7.8px;background:#569cd6"></i>
<i style="left:15.5px;top:183px;width:20.2px;background:#9cdcfe"></i>
<i style="left:37.2px;top:183px;width:1.6px;background:#d4d4d4"></i>
<i style="left:40.3px;top:183px;width:4.7px;background:#569cd6"></i>
<i style="left:46.5px;top:183px;width:3.1px;background:#9cdcfe"></i>
<i style="left:49.6px;top:183px;width:1.6px;background:#d4d4d4"></i>
<i style="left:51.1px;top:183px;width:9.3px;background:#4ec9b0"></i>
<i style="left:60.5px;top:183px;width:1.6px;background:#179fff"></i>
<i style="left:62.0px;top:183px;width:6.2px;background:#569cd6"></i>
<i style="left:68.2px;top:183px;width:1.6px;background:#d4d4d4"></i>
<i style="left:71.3px;top:183px;width:35.6px;background:#ce9178"></i>
<i style="left:107.0px;top:183px;width:1.6px;background:#d4d4d4"></i>
<i style="left:110.0px;top:183px;width:1.6px;background:#ffd700"></i>
<i style="left:9.3px;top:186px;width:31.0px;background:#9cdcfe"></i>
<i style="left:40.3px;top:186px;width:1.6px;background:#d4d4d4"></i>
<i style="left:43.4px;top:186px;width:18.6px;background:#ce9178"></i>
<i style="left:62.0px;top:186px;width:1.6px;background:#d4d4d4"></i>
<i style="left:9.3px;top:189px;width:24.8px;background:#9cdcfe"></i>
<i style="left:34.1px;top:189px;width:1.6px;background:#d4d4d4"></i>
<i style="left:37.2px;top:189px;width:6.2px;background:#569cd6"></i>
<i style="left:43.4px;top:189px;width:1.6px;background:#d4d4d4"></i>
<i style="left:9.3px;top:192px;width:26.4px;background:#9cdcfe"></i>
<i style="left:35.6px;top:192px;width:1.6px;background:#d4d4d4"></i>
<i style="left:38.8px;top:192px;width:3.1px;background:#9cdcfe"></i>
<i style="left:41.9px;top:192px;width:1.6px;background:#d4d4d4"></i>
<i style="left:43.4px;top:192px;width:26.4px;background:#4ec9b0"></i>
<i style="left:69.8px;top:192px;width:1.6px;background:#d4d4d4"></i>
<i style="left:71.3px;top:192px;width:15.5px;background:#4fc1ff"></i>
<i style="left:86.8px;top:192px;width:1.6px;background:#d4d4d4"></i>
<i style="left:9.3px;top:195px;width:20.2px;background:#9cdcfe"></i>
<i style="left:29.4px;top:195px;width:1.6px;background:#d4d4d4"></i>
<i style="left:32.6px;top:195px;width:6.2px;background:#569cd6"></i>
<i style="left:38.8px;top:195px;width:1.6px;background:#d4d4d4"></i>
<i style="left:6.2px;top:198px;width:1.6px;background:#ffd700"></i>
<i style="left:7.8px;top:198px;width:1.6px;background:#179fff"></i>
<i style="left:9.3px;top:198px;width:1.6px;background:#d4d4d4"></i>
<i style="left:6.2px;top:204px;width:4.7px;background:#569cd6"></i>
<i style="left:12.4px;top:204px;width:4.7px;background:#9cdcfe"></i>
<i style="left:17.1px;top:204px;width:1.6px;background:#d4d4d4"></i>
<i style="left:18.6px;top:204px;width:14.0px;background:#4ec9b0"></i>
<i style="left:32.6px;top:204px;width:1.6px;background:#179fff"></i>
<i style="left:34.1px;top:204px;width:6.2px;background:#569cd6"></i>
<i style="left:40.3px;top:204px;width:1.6px;background:#d4d4d4"></i>
<i style="left:43.4px;top:204px;width:20.2px;background:#ce9178"></i>
<i style="left:63.6px;top:204px;width:1.6px;background:#d4d4d4"></i>
<i style="left:66.7px;top:204px;width:1.6px;background:#ffd700"></i>
<i style="left:9.3px;top:207px;width:7.8px;background:#9cdcfe"></i>
<i style="left:17.1px;top:207px;width:1.6px;background:#d4d4d4"></i>
<i style="left:20.2px;top:207px;width:4.7px;background:#9cdcfe"></i>
<i style="left:24.8px;top:207px;width:1.6px;background:#d4d4d4"></i>
<i style="left:26.4px;top:207px;width:4.7px;background:#9cdcfe"></i>
<i style="left:31.0px;top:207px;width:1.6px;background:#d4d4d4"></i>
<i style="left:9.3px;top:210px;width:15.5px;background:#9cdcfe"></i>
<i style="left:24.8px;top:210px;width:1.6px;background:#d4d4d4"></i>
<i style="left:27.9px;top:210px;width:7.8px;background:#ce9178"></i>
<i style="left:35.6px;top:210px;width:1.6px;background:#d4d4d4"></i>
<i style="left:6.2px;top:213px;width:1.6px;background:#ffd700"></i>
<i style="left:7.8px;top:213px;width:1.6px;background:#179fff"></i>
<i style="left:9.3px;top:213px;width:1.6px;background:#d4d4d4"></i>
<i style="left:6.2px;top:219px;width:4.7px;background:#569cd6"></i>
<i style="left:12.4px;top:219px;width:4.7px;background:#9cdcfe"></i>
<i style="left:17.1px;top:219px;width:1.6px;background:#d4d4d4"></i>
<i style="left:18.6px;top:219px;width:14.0px;background:#4ec9b0"></i>
<i style="left:32.6px;top:219px;width:1.6px;background:#179fff"></i>
<i style="left:34.1px;top:219px;width:6.2px;background:#569cd6"></i>
<i style="left:40.3px;top:219px;width:1.6px;background:#d4d4d4"></i>
<i style="left:43.4px;top:219px;width:14.0px;background:#ce9178"></i>
<i style="left:57.4px;top:219px;width:1.6px;background:#d4d4d4"></i>
<i style="left:60.5px;top:219px;width:1.6px;background:#ffd700"></i>
<i style="left:9.3px;top:222px;width:7.8px;background:#9cdcfe"></i>
<i style="left:17.1px;top:222px;width:1.6px;background:#d4d4d4"></i>
<i style="left:20.2px;top:222px;width:20.2px;background:#9cdcfe"></i>
<i style="left:40.3px;top:222px;width:1.6px;background:#d4d4d4"></i>
<i style="left:41.9px;top:222px;width:24.8px;background:#9cdcfe"></i>
<i style="left:66.7px;top:222px;width:1.6px;background:#d4d4d4"></i>
<i style="left:6.2px;top:225px;width:1.6px;background:#ffd700"></i>
<i style="left:7.8px;top:225px;width:1.6px;background:#179fff"></i>
<i style="left:9.3px;top:225px;width:1.6px;background:#d4d4d4"></i>
<i style="left:3.1px;top:228px;width:1.6px;background:#da70d6"></i>
<i style="left:0.0px;top:231px;width:1.6px;background:#ffd700"></i>
  </div>
  <div class="a" style="left:1295px;top:86px;width:23px;height:457px;background:#4b4b4b"></div>
  <div class="a" style="left:104px;top:1309px;width:996px;height:18px;background:rgba(85,85,85,.85)"></div>
</div>

<!-- video overlay -->
<div class="a" style="left:798px;top:1012px;width:914px;height:146px;background:rgba(46,46,48,.5);border-radius:16px"></div>
<svg width="2514" height="1336" style="left:0;top:0">
  <g fill="#9a9a9a">
   <path d="M823 1054 h6 l9 -7 v26 l-9 -7 h-6 z"/>
  </g>
  <path d="M842 1052 a9 9 0 0 1 0 14 M847 1048 a14 14 0 0 1 0 22 M852 1045 a19 19 0 0 1 0 28" stroke="#9a9a9a" stroke-width="1.5" fill="none"/>
  <rect x="866" y="1056" width="160" height="8" rx="4" fill="#2f63c9" opacity=".82"/>
  <circle cx="1023" cy="1060" r="16" fill="#7d7d7d"/>
  <g fill="#9a9a9a">
   <path d="M1156 1059 l22 -13 v26 z M1178 1059 l22 -13 v26 z"/>
   <path d="M1235 1036 l46 24 l-46 24 z" stroke="#9a9a9a" stroke-width="6" stroke-linejoin="round"/>
   <path d="M1310 1046 l22 13 l-22 13 z M1332 1046 l22 13 l-22 13 z"/>
  </g>
  <path d="M1488 1068 h-7 v-24 h30 v24 h-7" stroke="#9a9a9a" stroke-width="2.5" fill="none"/>
  <path d="M1496 1061 l10 12 h-20 z" fill="#9a9a9a"/>
  <rect x="1558" y="1043" width="30" height="24" rx="3" stroke="#9a9a9a" stroke-width="2.5" fill="none"/>
  <rect x="1575" y="1055" width="23" height="20" rx="4" fill="#9a9a9a"/>
  <path d="M1564 1049 l7 7 M1565 1056 h6 v-6" stroke="#9a9a9a" stroke-width="2" fill="none"/>
  <path d="M1660 1046 l12 12 l-12 12 M1673 1046 l12 12 l-12 12" stroke="#9a9a9a" stroke-width="2.2" fill="none"/>
  <rect x="1015" y="1110" width="7" height="30" rx="3.5" fill="#8a8a8a"/>
  <rect x="1023" y="1121" width="475" height="7" rx="3.5" fill="#3a3a3b"/>
</svg>
<div class="a" style="left:822px;top:1108px;font-size:26px;color:#8a8a8a;letter-spacing:.2px">00:00:00:00</div>
<div class="a" style="left:1546px;top:1108px;font-size:26px;color:#8a8a8a;letter-spacing:.2px">00:00:23:33</div>

<!-- right panel -->
<div id="rpanel" class="a">
  <div class="a" style="left:31px;top:15px;font-size:17px;color:#dcdcdc">AMAZON Q</div>
  <div class="a" style="left:27px;top:40px;width:101px;height:3px;background:#1f5f9f"></div>
  <div class="a" style="left:0px;top:53px;width:104px;height:3px;background:#1d5590"></div>
  <div class="a" style="left:0px;top:56px;width:104px;height:42px;background:#1e1e1e"></div>
  <div class="a" style="left:0;top:98px;width:778px;height:1px;background:#2b2b2b"></div>
  <div class="a" style="left:104px;top:52px;width:674px;height:1px;background:#222"></div>
  <div class="a" style="left:20px;top:66px;font-size:21px;color:#dddddd">Chat</div>
  <svg width="778" height="1327" fill="none" stroke-linecap="round" stroke-linejoin="round">
   <g fill="#c8c8c8"><circle cx="702" cy="24" r="1.8"/><circle cx="710" cy="24" r="1.8"/><circle cx="718" cy="24" r="1.8"/></g>
   <path d="M743 18 l12 12 M755 18 l-12 12" stroke="#d0d0d0" stroke-width="2"/>
   <path d="M77 70 l12 12 M89 70 l-12 12" stroke="#c8c8c8" stroke-width="2"/>
   <path d="M127 66 v19 M117.5 75.5 h19" stroke="#c8c8c8" stroke-width="2.2"/>
   <path d="M749 67 h22 v16 h-12 l-6 5 v-5 h-4 z" stroke="#c8c8c8" stroke-width="2"/>
   
  </svg>
  <div class="a" style="left:20px;top:119px;width:724px;height:253px;background:#1c1c1c;border:1px solid #222;border-radius:8px"></div>
  <div class="chat" style="top:154px">Hi, I'm Amazon Q. I can answer your software development</div>
  <div class="chat" style="top:185px">questions.</div>
  <div class="chat" style="top:217px">Ask me to explain, debug, or optimize your code.</div>
  <div class="chat" style="top:248px">You can enter <span style="display:inline-block;background:#232323;border-radius:4px;padding:0 4px;font-family:'Liberation Mono',monospace;font-size:18px">/</span> to see a list of quick actions. Use <span style="display:inline-block;background:#232323;border-radius:4px;padding:0 3px;font-family:'Liberation Mono',monospace;font-size:18px">@</span> to add</div>
  <div class="chat" style="top:282px">saved prompts, files, folders, or your entire workspace as</div>
  <div class="chat" style="top:313px">context.</div>
  <div class="a" style="left:20px;top:393px;font-size:18.5px;font-style:italic;color:#8a8a8a">Try Examples:</div>
  <div class="btn" style="left:20px;width:262px">Explain selected code</div>
  <div class="btn" style="left:286px;width:339px">How can Amazon Q help me?</div>
  <div class="a" style="left:4px;top:1094px;width:774px;height:2px;background:#262626"></div>
  <div class="a" style="left:20px;top:1116px;width:745px;height:116px;background:#1d1d1d;border:1.5px solid #272727;border-radius:10px"></div>
  <div class="a" style="left:35px;top:1135px;font-size:25.6px;color:#8b8b8b;white-space:nowrap">Ask a question. Use @ to add context, / for quick actions</div>
  <div class="a" style="left:32px;top:1248px;font-size:19.2px;color:#d0d0d0;white-space:nowrap">Amazon Q Developer uses generative AI. You may need to verify responses. See the</div>
  <div class="a" style="left:276px;top:1279px;font-size:19.2px;color:#4a93dc;white-space:nowrap">AWS Responsible AI Policy<span style="color:#d0d0d0">.</span></div>
  <div class="a" style="left:708px;top:1291px;width:52px;height:52px;border-radius:26px;background:#262626"></div>
  <svg width="778" height="1327" fill="none" stroke="#e0e0e0" stroke-width="2.2" stroke-linecap="round">
   <path d="M721 1312 v-5 a3 3 0 0 1 3 -3 h4 M739 1304 h4 a3 3 0 0 1 3 3 v5 M727 1311 h13 M726 1316.5 h15 M727.5 1322 h12 M721 1325 v4 M746 1325 v4"/>
   <path d="M721 1139 l21 9.5 l-21 9.5 l4.5 -9.5 z M725.5 1148.5 h16" stroke="#383838" stroke-width="3.2" stroke-linejoin="round"/>
  </svg>
</div>

<!-- green click circle -->
<svg width="2514" height="1336" style="left:0;top:0">
  <circle cx="1715" cy="401" r="81" fill="none" stroke="rgba(40,205,150,.32)" stroke-width="14"/>
  <circle cx="1715" cy="401" r="89.8" fill="none" stroke="#2bd8a2" stroke-width="6.6"/>
  <path d="M1716 398 v22 l5 -5 l4 9 l3.5 -1.5 l-4 -8.5 h7 z" fill="#111" stroke="#fff" stroke-width="1.5" stroke-linejoin="round"/>
</svg>
</body></html>
